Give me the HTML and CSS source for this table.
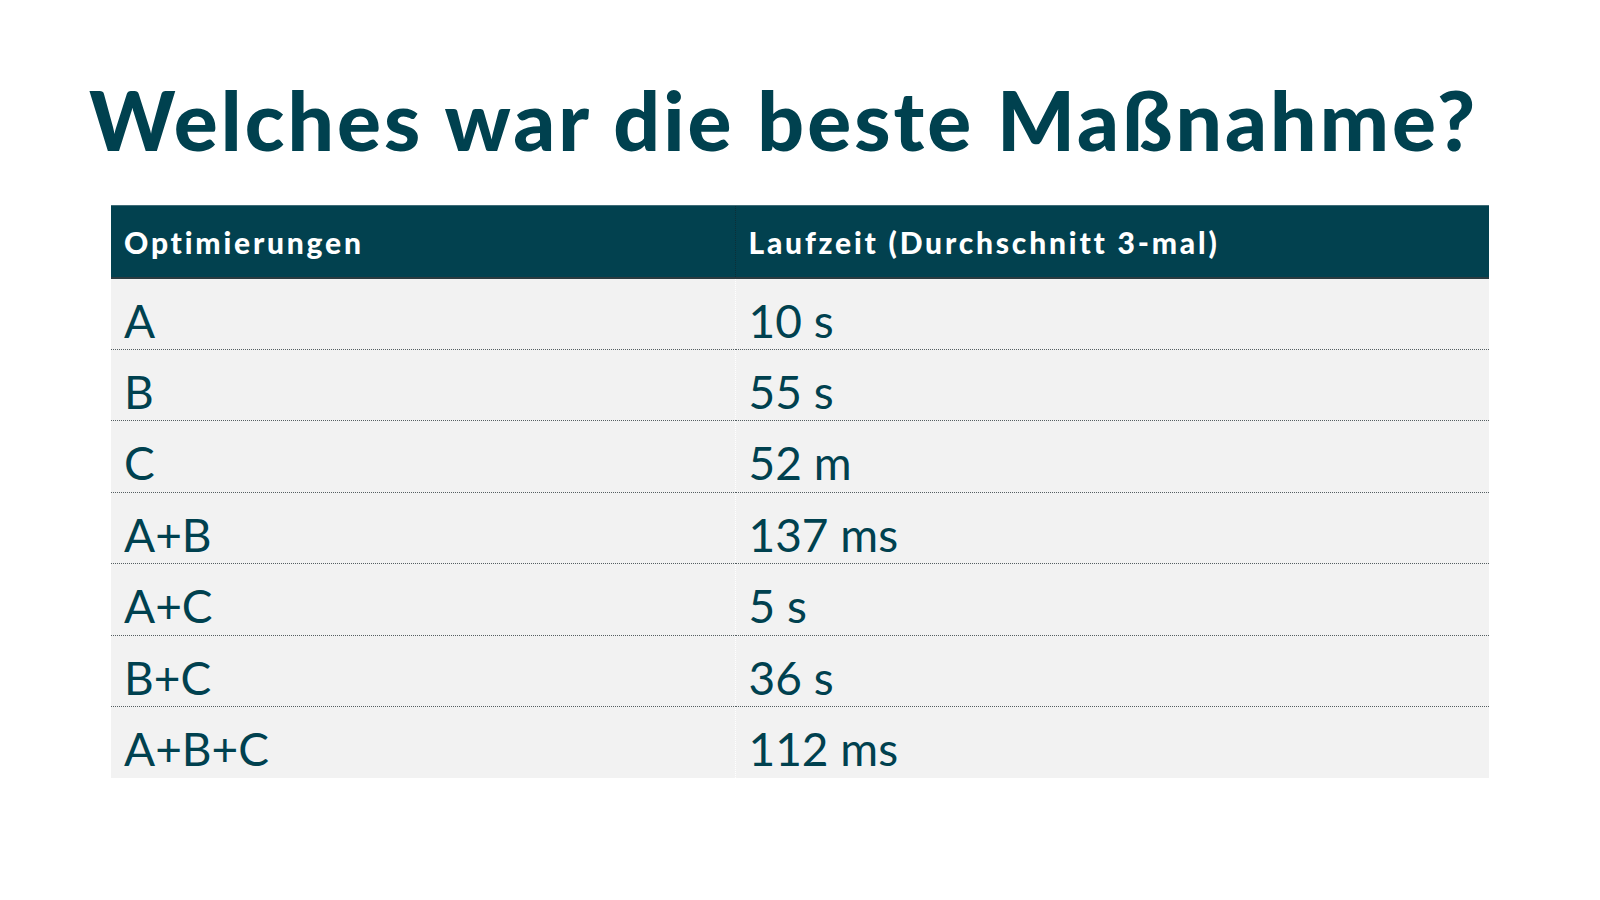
FILE: index.html
```html
<!DOCTYPE html>
<html lang="de">
<head>
<meta charset="utf-8">
<link rel="stylesheet" href="styles.css">
</head>
<body>
<main class="slide">
  <h1 class="title">Welches war die beste Maßnahme?</h1>
  <table class="grid">
    <thead>
      <tr><th class="c1">Optimierungen</th><th class="c2">Laufzeit (Durchschnitt 3-mal)</th></tr>
    </thead>
    <tbody>
      <tr><td class="c1">A</td><td class="c2">10 s</td></tr>
      <tr><td class="c1">B</td><td class="c2">55 s</td></tr>
      <tr><td class="c1">C</td><td class="c2">52 m</td></tr>
      <tr><td class="c1">A+B</td><td class="c2">137 ms</td></tr>
      <tr><td class="c1">A+C</td><td class="c2">5 s</td></tr>
      <tr><td class="c1">B+C</td><td class="c2">36 s</td></tr>
      <tr><td class="c1">A+B+C</td><td class="c2">112 ms</td></tr>
    </tbody>
  </table>
</main>
</body>
</html>
```
FILE: styles.css
```css
html, body {
  margin: 0;
  padding: 0;
  background: #ffffff;
}
body {
  width: 1600px;
  height: 900px;
  overflow: hidden;
  font-family: "Lato", "Liberation Sans", sans-serif;
  color: #00414f;
}
.slide {
  display: flex;
  flex-direction: column;
  padding: 70px 111px 0 111px;
}
.title {
  margin: 0 0 37px -22px;
  font-weight: 900;
  font-size: 82px;
  line-height: 1.2;
  letter-spacing: 3.1px;
  white-space: nowrap;
  color: #00414f;
}
.grid {
  width: 1378px;
  border-collapse: collapse;
  table-layout: fixed;
}
.grid .c1 { width: 624px; }
.grid th {
  background: #02414f;
  color: #ffffff;
  text-align: left;
  font-weight: 900;
  font-size: 30px;
  letter-spacing: 2.8px;
  height: 72px;
  box-sizing: border-box;
  padding: 0 13px;
  vertical-align: middle;
  border-top: 1px solid #3f6c77;
  border-bottom: 2px solid #2c3b40;
}
.grid th.c1 { border-right: 1px dotted #0c2f38; }
.grid td {
  background: #f2f2f2;
  font-size: 46px;
  font-weight: 400;
  height: 71.5px;
  box-sizing: border-box;
  padding: 14px 13px 0 13px;
  vertical-align: top;
  line-height: 1.2;
  border-bottom: 1px dotted #555f62;
}
.grid td.c1 { border-right: 1px dotted #ffffff; }
.grid tbody tr:last-child td { border-bottom: none; }
```
